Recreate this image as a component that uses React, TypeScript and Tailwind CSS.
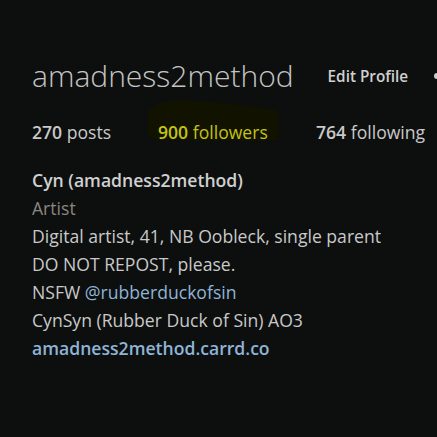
import React from "react";

// Soft highlighter mark drawn behind the follower count
function Highlight() {
  return (
    <svg
      className="absolute left-[-12px] top-[-19px] pointer-events-none"
      width="134"
      height="42"
      viewBox="0 0 134 42"
    >
      <path
        d="M2 12 C8 5 16 1 30 0 C48 0 70 3 92 5 C110 7 124 9 132 11 L133 40 C100 41 60 41 20 40 C10 40 4 38 1 35 Z"
        fill="#121200"
      />
    </svg>
  );
}

export default function App() {
  return (
    <div
      className="w-[437px] h-[437px] overflow-hidden bg-[#0d0f0f] text-[#c9c9c9]"
      style={{ fontFamily: '"Open Sans", "Noto Sans", sans-serif' }}
    >
      <div className="pl-[32px] pt-[58px]">
        <div className="flex items-center h-[36px]">
          <h1 className="text-[30px] font-light leading-[36px] text-[#c4c4c4] whitespace-nowrap">
            amadness2method
          </h1>
          <button className="ml-[34px] text-[15.3px] font-semibold text-[#d0d0d0] whitespace-nowrap">
            Edit Profile
          </button>
          <span className="ml-[26px] w-[6px] h-[6px] rounded-full bg-[#cfcfcf] shrink-0" />
        </div>

        <div className="flex items-center mt-[20px] h-[36px] text-[17.6px] whitespace-nowrap">
          <span className="w-[126px]">
            <span className="font-semibold">270</span> posts
          </span>
          <span className="relative w-[158px]">
            <Highlight />
            <span className="relative text-[#c3c317]">
              <span className="font-semibold">900</span> followers
            </span>
          </span>
          <span>
            <span className="font-semibold">764</span> following
          </span>
        </div>

        <div className="mt-[16px] text-[17.6px] leading-[28px] whitespace-nowrap">
          <div className="font-semibold text-[#d0d0d0]">Cyn (amadness2method)</div>
          <div className="text-[#8c8681]">Artist</div>
          <div>Digital artist, 41, NB Oobleck, single parent</div>
          <div>DO NOT REPOST, please.</div>
          <div>
            NSFW <span className="text-[#8fb4d6]">@rubberduckofsin</span>
          </div>
          <div>CynSyn (Rubber Duck of Sin) AO3</div>
          <div className="font-semibold text-[#8fb4d6]">amadness2method.carrd.co</div>
        </div>
      </div>
    </div>
  );
}
